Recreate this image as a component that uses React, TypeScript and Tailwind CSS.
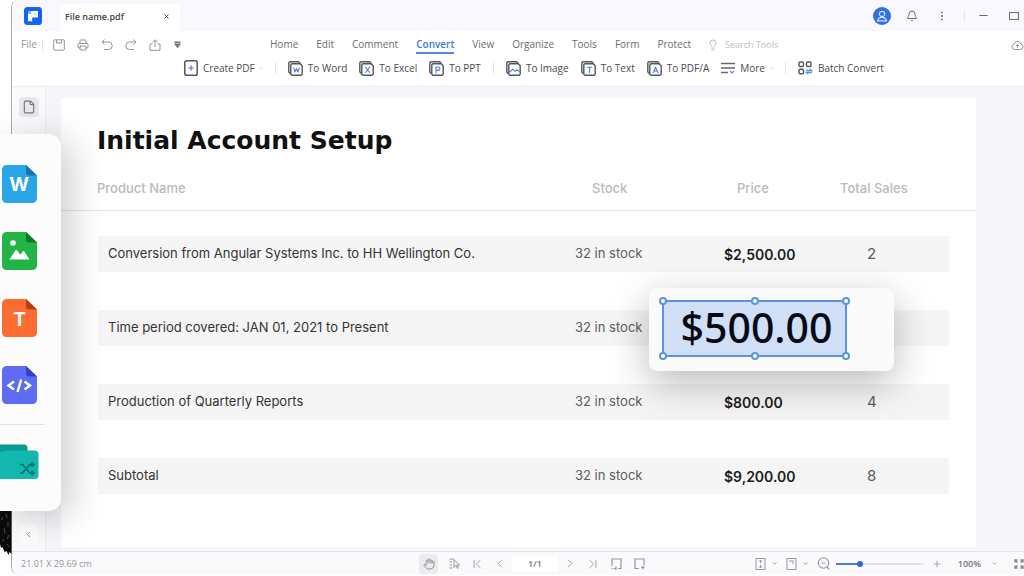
import type { ReactNode } from "react";
import {
  Bell,
  ChevronDown,
  ChevronLeft,
  ChevronRight,
  ChevronFirst,
  ChevronLast,
  EllipsisVertical,
  File,
  Hand,
  Lightbulb,
  Minus,
  Plus,
  Printer,
  X,
} from "lucide-react";

const menu = ["Home", "Edit", "Comment", "Convert", "View", "Organize", "Tools", "Form", "Protect"];

const rows = [
  { name: "Conversion from Angular Systems Inc. to HH Wellington Co.", price: "$2,500.00", sales: "2" },
  { name: "Time period covered: JAN 01, 2021 to Present", price: null, sales: "" },
  { name: "Production of Quarterly Reports", price: "$800.00", sales: "4" },
  { name: "Subtotal", price: "$9,200.00", sales: "8" },
];

const handles = [
  "-left-[5px] -top-[5px]",
  "left-1/2 -ml-1 -top-[5px]",
  "-right-[5px] -top-[5px]",
  "-left-[5px] -bottom-[5px]",
  "left-1/2 -ml-1 -bottom-[5px]",
  "-right-[5px] -bottom-[5px]",
];

const columns = "grid grid-cols-[477fr_149fr_117fr_108fr]";

function IconButton({ label, children, className = "" }: { label: string; children: ReactNode; className?: string }) {
  return (
    <button type="button" aria-label={label} className={`flex shrink-0 items-center justify-center ${className}`}>
      {children}
    </button>
  );
}

function Divider() {
  return <span className="block h-3 w-px shrink-0 bg-[#e6e6ea]" />;
}

function Tool({ label, icon, menu }: { label: string; icon: ReactNode; menu?: boolean }) {
  return (
    <button type="button" className="flex shrink-0 items-center gap-[5px] whitespace-nowrap">
      {icon}
      {label}
      {menu && <ChevronDown size={5} className="-mx-px text-[#999]" />}
    </button>
  );
}

function ConvertIcon({ children }: { children: ReactNode }) {
  return (
    <svg width="15" height="15" viewBox="0 0 15 15" fill="none" stroke="#55555a" strokeLinejoin="round" strokeLinecap="round">
      <path d="M2 12.200 .8 11V2.200A1.400 1.400 0 0 1 2.200.8h8.400l1.400 1.200" strokeWidth="1.400" />
      <path d="M4.200 2.700h8l2 2v8.100a1.400 1.400 0 0 1-1.400 1.400H4.200a1.400 1.400 0 0 1-1.400-1.400V4.100a1.400 1.400 0 0 1 1.400-1.400z" fill="#fff" strokeWidth="1.400" />
      <g stroke="#4c7fe0" strokeWidth="1.100">{children}</g>
    </svg>
  );
}

function FileIcon({ color, fold, children }: { color: string; fold: string; children: ReactNode }) {
  return (
    <svg width="35" height="38" viewBox="0 0 35 38">
      <path d="M4.500 0H24l11 10.500V33.500a4.500 4.500 0 0 1-4.500 4.500h-26A4.500 4.500 0 0 1 0 33.500v-29A4.500 4.500 0 0 1 4.500 0z" fill={color} />
      <path d="M24 0 35 10.500h-7.500A3.500 3.500 0 0 1 24 7z" fill={fold} />
      {children}
    </svg>
  );
}

function TitleBar() {
  return (
    <header className="flex h-[31px] items-center bg-[#f8f8fe] pl-3">
      <svg width="18" height="18" viewBox="0 0 18 18">
        <rect width="18" height="18" rx="3.500" fill="#1463f3" />
        <path d="M4 4h10v6.500H8.200v3.800H4z" fill="#fff" />
        <path d="M4 4h3v3H4z" fill="#8ab4ff" />
        <path d="M9.800 6.500h2v1.800h-2z" fill="#b9d3ff" />
      </svg>
      <div className="ml-[18px] mt-1 flex h-[27px] w-30 items-center justify-between rounded-t bg-white pb-0.5 pl-[5px] pr-2.5 text-[#444]">
        <span className="text-[9px] font-semibold">File name.pdf</span>
        <IconButton label="Close tab">
          <X size={7} strokeWidth={3} />
        </IconButton>
      </div>
      <div className="ml-auto flex items-center text-[#6a6a70]">
        <IconButton label="Account" className="size-[18px] rounded-full bg-[#2f6fe4]">
          <svg width="12" height="12" viewBox="0 0 12 12" fill="none" stroke="#cfe0ff" strokeWidth="1.200" strokeLinecap="round">
            <circle cx="6" cy="4" r="2.700" />
            <path d="M1.500 10.800C2 8.500 3.600 7.300 6 7.300s4 1.200 4.500 3.500z" />
          </svg>
        </IconButton>
        <IconButton label="Notifications" className="ml-[15px]">
          <Bell size={12} />
        </IconButton>
        <IconButton label="Menu" className="ml-[18px]">
          <EllipsisVertical size={12} />
        </IconButton>
        <span className="ml-4 mr-3">
          <Divider />
        </span>
        <IconButton label="Minimize">
          <Minus size={13} />
        </IconButton>
        <IconButton label="Maximize" className="ml-[19px] mr-[5px]">
          <span className="block h-2 w-2.5 border border-[#6a6a70]" />
        </IconButton>
      </div>
    </header>
  );
}

function Ribbon() {
  return (
    <div className="border-b border-[#ececf0] bg-white">
      <nav className="flex h-[27px] items-center text-[10px] text-[#6c6c72]">
        <div className="flex w-[258px] shrink-0 items-center pl-[9px] text-[#939399]">
          <button type="button">File</button>
          <span className="ml-[5px] mr-2.5">
            <Divider />
          </span>
          <div className="flex items-center gap-3">
            <IconButton label="Save">
              <svg width="12" height="12" viewBox="0 0 12 12" fill="none" stroke="currentColor">
                <path d="M1.500.8h9a.8.8 0 0 1 .8.8v8.800a.8.8 0 0 1-.8.8h-9a.8.8 0 0 1-.8-.8V1.600a.8.8 0 0 1 .8-.8zM3.500 1v3h5V1" />
              </svg>
            </IconButton>
            <IconButton label="Print">
              <Printer size={12} />
            </IconButton>
            <IconButton label="Undo">
              <svg width="12" height="12" viewBox="0 0 12 12" fill="none" stroke="currentColor">
                <path d="M3.500.5 1 3l2.500 2.500M1 3h6.500a3.700 3.700 0 0 1 0 7.500H3" />
              </svg>
            </IconButton>
            <IconButton label="Redo">
              <svg width="12" height="12" viewBox="0 0 12 12" fill="none" stroke="currentColor">
                <path d="M8.500.5 11 3 8.500 5.500M11 3H4.500a3.700 3.700 0 0 0 0 7.500H9" />
              </svg>
            </IconButton>
            <IconButton label="Share">
              <svg width="12" height="12" viewBox="0 0 12 12" fill="none" stroke="currentColor">
                <path d="M3.500 5H1v6.300h10V5H8.500M6 8V1M3.500 3.200 6 .8l2.500 2.400" />
              </svg>
            </IconButton>
            <IconButton label="Customize toolbar">
              <svg width="9" height="8" viewBox="0 0 9 8" fill="#77777c">
                <path d="M1.500.5h6v1.500h-6zM.8 2.500h7.400L4.500 7.200z" />
              </svg>
            </IconButton>
          </div>
        </div>
        <div className="flex items-center gap-[18px]">
          {menu.map((item) => (
            <a
              key={item}
              href="#"
              className={item === "Convert" ? "border-b-2 border-[#4d8ae0] pt-0.5 font-semibold text-[#3a7bdc]" : ""}
            >
              {item}
            </a>
          ))}
        </div>
        <label className="ml-4 flex items-center gap-1.5 text-[#bdbdc2]">
          <Lightbulb size={12} />
          <input
            type="text"
            aria-label="Search Tools"
            placeholder="Search Tools"
            className="w-20 bg-transparent text-[9px] outline-none placeholder:text-[#bdbdc2]"
          />
        </label>
        <IconButton label="Upload to cloud" className="ml-auto text-[#939399]">
          <svg width="13" height="12" viewBox="0 0 13 12" fill="none" stroke="currentColor">
            <path d="M3.500 10.500a2.800 2.800 0 0 1-.4-5.500 3.500 3.500 0 0 1 6.800 0 2.800 2.800 0 0 1-.4 5.500zM6.500 9V5.500M5 7l1.500-1.500L8 7" />
          </svg>
        </IconButton>
      </nav>
      <div className="flex h-7 items-start pl-[172px] pt-0.5 text-[10px] text-[#4a4a50]">
        <div className="flex h-4 items-center gap-3">
          <Tool
            label="Create PDF"
            menu
            icon={
              <svg width="14" height="16" viewBox="0 0 14 16" fill="none" strokeLinecap="round">
                <rect x=".8" y=".8" width="12.400" height="14.400" rx="1.800" stroke="#55555a" strokeWidth="1.500" />
                <path d="M7 5.800v4.400M4.800 8h4.400" stroke="#5c6fc0" strokeWidth="1.200" />
              </svg>
            }
          />
          <Divider />
          <Tool label="To Word" icon={<ConvertIcon><path d="m5.800 7 1.200 4 1.500-3.500 1.500 3.500 1.300-4" /></ConvertIcon>} />
          <Tool label="To Excel" icon={<ConvertIcon><path d="m6.700 6 3.900 5.500M10.600 6l-3.900 5.500" /></ConvertIcon>} />
          <Tool label="To PPT" icon={<ConvertIcon><path d="M7 11.700V6h2.200a1.600 1.600 0 0 1 0 3.400H7" /></ConvertIcon>} />
          <Divider />
          <Tool label="To Image" icon={<ConvertIcon><path d="m3.800 11 3-2.800 2.400 2.200 2-1.600 2.200 1.900" /></ConvertIcon>} />
          <Tool label="To Text" icon={<ConvertIcon><path d="M6.500 6.300h4.200M8.600 6.300v5.200" /></ConvertIcon>} />
          <Tool label="To PDF/A" icon={<ConvertIcon><path d="m6.300 11.700 2.300-5.500 2.300 5.500M7.200 10h2.800" /></ConvertIcon>} />
          <Tool
            label="More"
            menu
            icon={
              <svg width="14" height="12" viewBox="0 0 14 12" fill="none" stroke="#66666b" strokeWidth="1.300">
                <path d="M0 1.500h14M0 6h14M0 10.500h7" />
                <path d="m9 9 2 2 2-2" stroke="#7390d8" />
              </svg>
            }
          />
          <Divider />
          <Tool
            label="Batch Convert"
            icon={
              <svg width="15" height="14" viewBox="0 0 15 14" fill="none" stroke="#55555a" strokeWidth="1.400">
                <rect x="1" y="1" width="4.500" height="4.500" rx="1.200" />
                <rect x="8.500" y="1" width="4.500" height="4.500" rx="1.200" />
                <rect x="1" y="8.300" width="4.500" height="4.500" rx="1.200" />
                <path d="M8 9.500h5.500L11.800 8M14 11.500H8.500l1.700 1.500" stroke="#4f9ae8" />
              </svg>
            }
          />
        </div>
      </div>
    </div>
  );
}

function Selection() {
  return (
    <div className="absolute -left-[75px] -top-[22px] z-10 h-[83px] w-[245px] rounded-lg bg-[#fafafa] pl-[13px] pt-3 shadow-[0_12px_40px_rgba(0,0,0,0.28)]">
      <div className="relative flex h-[57px] w-[185px] items-center justify-center border-2 border-[#5d92dc] bg-[#d0dff5] pb-0.5 pl-1 font-['Noto_Sans'] text-[41px] font-medium leading-none text-[#060a14]">
        $500.00
        {handles.map((place) => (
          <span key={place} className={`absolute size-2 rounded-full border-2 border-[#5d92dc] bg-white ${place}`} />
        ))}
      </div>
    </div>
  );
}

function Document() {
  return (
    <article className="min-w-0 flex-1 bg-white pb-[52px] font-['Inter',sans-serif]">
      <h1 className="pl-9 pt-[25px] font-['DejaVu_Sans'] text-[25px] font-bold leading-9 text-[#111]">
        Initial Account Setup
      </h1>
      <table className="mt-[19px] block">
        <thead className="block border-b border-[#e6e6e6] pl-9 pr-7 text-[13px] text-[#bababa]">
          <tr className={`${columns} h-8 text-left`}>
            <th className="pt-px font-medium">Product Name</th>
            <th className="pl-[18px] pt-px font-medium">Stock</th>
            <th className="pl-3.5 pt-px font-medium">Price</th>
            <th className="pt-px font-medium">Total Sales</th>
          </tr>
        </thead>
        <tbody className="flex flex-col gap-[38px] pl-[37px] pr-[27px] pt-[25px] text-[13px] text-[#5c5c5c]">
          {rows.map((row) => (
            <tr key={row.name} className={`${columns} h-9 items-center whitespace-nowrap bg-[#f5f5f5]`}>
              <td className="pl-2.5 text-[#333]">{row.name}</td>
              <td>32 in stock</td>
              <td className="relative flex h-full items-center text-[14px] font-semibold text-[#1c1c1c]">
                {row.price ?? <Selection />}
              </td>
              <td className="pl-[26px] text-[15px]">{row.sales}</td>
            </tr>
          ))}
        </tbody>
      </table>
    </article>
  );
}

function StatusBar() {
  return (
    <footer className="flex h-6 items-center border-t border-[#e4e4e8] bg-[#fafafc] text-[9px] text-[#96969c]">
      <span className="w-[407px] shrink-0 pl-[9px]">21.01 X 29.69 cm</span>
      <div className="flex items-center gap-[9px]">
        <IconButton label="Hand tool" className="h-5 w-[19px] rounded-sm bg-[#ececee]">
          <Hand size={12} />
        </IconButton>
        <IconButton label="Select tool" className="w-3.5">
          <svg width="11" height="11" viewBox="0 0 11 11" fill="none" stroke="currentColor">
            <path d="M.5 1h4M.5 4h2.500M.5 7h2.500M.5 10h3M5 1.500v8l1.800-2 1.700 3 1-.6-1.600-2.800h2.600z" />
          </svg>
        </IconButton>
        <IconButton label="First page" className="w-3.5">
          <ChevronFirst size={16} strokeWidth={1.5} />
        </IconButton>
        <IconButton label="Previous page" className="w-3.5">
          <ChevronLeft size={15} strokeWidth={1.5} />
        </IconButton>
        <input
          type="text"
          aria-label="Page"
          defaultValue="1/1"
          className="-mx-1 h-4 w-[46px] bg-white text-center text-[9px] font-semibold text-[#77777c] outline-none"
        />
        <IconButton label="Next page" className="w-3.5">
          <ChevronRight size={15} strokeWidth={1.5} />
        </IconButton>
        <IconButton label="Last page" className="w-3.5">
          <ChevronLast size={16} strokeWidth={1.5} />
        </IconButton>
        <IconButton label="Rotate left" className="w-3.5">
          <svg width="11" height="12" viewBox="0 0 11 12" fill="none" stroke="currentColor" strokeWidth="1.200">
            <path d="M1 8V1h9v9.500H7M2.500 10.500H5M5 8.500v3.500M1 10v1" />
          </svg>
        </IconButton>
        <IconButton label="Rotate right" className="w-3.5">
          <svg width="11" height="12" viewBox="0 0 11 12" fill="none" stroke="currentColor" strokeWidth="1.200">
            <path d="M10 7V1H1v9.500h4M7 9.500h3.500M9 7.500v4" />
          </svg>
        </IconButton>
      </div>
      <div className="ml-auto flex items-center">
        <IconButton label="Scroll mode" className="gap-[5px]">
          <svg width="11" height="12" viewBox="0 0 11 12" fill="none" stroke="currentColor">
            <path d="M1 .5h9v11H1zM5.500 2v3M4 3.500 5.500 2 7 3.500M5.500 7v3M4 8.500 5.500 10 7 8.500" />
          </svg>
          <ChevronDown size={7} strokeWidth={3} />
        </IconButton>
        <IconButton label="Page fit" className="ml-2 gap-[5px]">
          <svg width="11" height="12" viewBox="0 0 11 12" fill="none" stroke="currentColor">
            <path d="M1 .5h9v11H1zM3 3h5M6 5h2" />
          </svg>
          <ChevronDown size={7} strokeWidth={3} />
        </IconButton>
        <IconButton label="Zoom out" className="ml-2">
          <svg width="13" height="13" viewBox="0 0 13 13" fill="none" stroke="currentColor" strokeWidth="1.100">
            <circle cx="6.500" cy="6" r="5.200" />
            <path d="m10 10 2.500 2.500M4.500 6h4" />
          </svg>
        </IconButton>
        <input
          type="range"
          aria-label="Zoom"
          defaultValue={26}
          className="ml-1.5 h-2 w-[88px] appearance-none bg-[linear-gradient(to_right,#4b7fd8_26%,#e2e3ea_26%)] bg-[length:100%_2px] bg-center bg-no-repeat [&::-webkit-slider-thumb]:size-1.5 [&::-webkit-slider-thumb]:appearance-none [&::-webkit-slider-thumb]:rounded-full [&::-webkit-slider-thumb]:bg-[#2f6bd0]"
        />
        <IconButton label="Zoom in" className="ml-2">
          <Plus size={10} />
        </IconButton>
        <button type="button" className="ml-4 flex items-center gap-2.5 font-semibold text-[#77777c]">
          100%
          <ChevronDown size={7} />
        </button>
        <IconButton label="Full screen" className="ml-4">
          <svg width="10" height="10" viewBox="0 0 10 10" fill="none" stroke="#85858a" strokeWidth="1.400">
            <path d="M1 3.500V1h2.500M6.500 1H9v2.500M1 6.500V9h2.500M9 6.500V9H6.500M1 1l2.500 2.500M9 1 6.500 3.500M1 9l2.500-2.500M9 9 6.500 6.500" />
          </svg>
        </IconButton>
      </div>
    </footer>
  );
}

function FormatPanel() {
  return (
    <aside className="absolute left-0 top-[134px] z-20 w-[61px] rounded-r-xl bg-[#fcfcfc] pb-8 pt-[31px] shadow-[10px_6px_36px_rgba(0,0,0,0.2)]">
      <div className="flex flex-col items-start gap-[29px] pl-0.5">
        <IconButton label="Word">
          <FileIcon color="#2aa5e8" fold="#1672b0">
            <text x="17" y="25.500" fill="#fff" fontSize="19" fontWeight="700" fontFamily="Inter" textAnchor="middle">W</text>
          </FileIcon>
        </IconButton>
        <IconButton label="Image">
          <FileIcon color="#22b545" fold="#0d7a2a">
            <circle cx="11" cy="11" r="2.800" fill="#fff" />
            <path d="m7.500 27.500 6-9.200a1 1 0 0 1 1.600 0l3.200 4.500 2.500-3.300a1 1 0 0 1 1.600 0l5 8z" fill="#fff" />
          </FileIcon>
        </IconButton>
        <IconButton label="Text">
          <FileIcon color="#fb6d32" fold="#c23c08">
            <text x="17.500" y="27" fill="#fff" fontSize="19" fontWeight="700" fontFamily="Inter" textAnchor="middle">T</text>
          </FileIcon>
        </IconButton>
        <IconButton label="Code">
          <FileIcon color="#5d6cf3" fold="#3440c0">
            <path d="m12 15.500-5.500 4 5.500 4M22.500 15.500l5.500 4-5.500 4M19.200 13.500l-3.700 12.500" fill="none" stroke="#fff" strokeWidth="2.400" />
          </FileIcon>
        </IconButton>
      </div>
      <hr className="mr-4 mt-5 border-[#e3e3e3]" />
      <IconButton label="Shuffle folder" className="mt-[19px]">
        <svg width="39" height="35" viewBox="0 0 39 35">
          <path d="M0 .5h24a3.500 3.500 0 0 1 3.500 3V16H0z" fill="#0a9c92" />
          <path d="M0 8.500 6 6.500h28.500a4 4 0 0 1 4 4V31a4 4 0 0 1-4 4H0z" fill="#12b8ad" />
          <path d="M20 20.500h2.500l7.500 8.500h3.500M20 29h2.500l7.500-8.500h3.500M31.500 18.500l2.500 2-2.500 2M31.500 27l2.500 2-2.500 2" fill="none" stroke="#08726e" strokeWidth="1.700" />
        </svg>
      </IconButton>
    </aside>
  );
}

export default function App() {
  return (
    <main className="relative flex min-h-screen flex-col overflow-hidden bg-white pb-px font-['Open_Sans',sans-serif]">
      <FormatPanel />
      <svg className="absolute bottom-4 left-0" width="12" height="52" viewBox="0 0 12 52">
        <path d="M0 0h11.500v46l-2-2-1 3-2-4-2 1-2-5-1.500 1L0 36z" fill="#0b0b0b" />
        <path d="M2 9v3M6 6l1 4M8 14v5M4 20l1 5M9 27l-2 4M3 31v3M7 36l2 3" stroke="#666" strokeWidth=".7" />
      </svg>
      <div className="ml-[11px] flex flex-1 flex-col overflow-hidden rounded-l-lg border-l border-[#a9a9ad]">
        <TitleBar />
        <Ribbon />
        <div className="flex flex-1 bg-[#f6f6fa]">
          <div className="flex w-[34px] shrink-0 flex-col items-center justify-between border-r border-[#ececf2] bg-[#fafafd] pb-2 pt-2.5">
            <IconButton label="Thumbnails" className="size-5 rounded-sm bg-[#e8e8ea] text-[#77777c]">
              <File size={14} />
            </IconButton>
            <IconButton label="Collapse sidebar" className="size-[18px] rounded-sm bg-white text-[#66666b]">
              <ChevronLeft size={9} />
            </IconButton>
          </div>
          <div className="flex min-w-0 flex-1 pb-1 pl-[15px] pr-12 pt-[11px]">
            <Document />
          </div>
        </div>
        <StatusBar />
      </div>
    </main>
  );
}
